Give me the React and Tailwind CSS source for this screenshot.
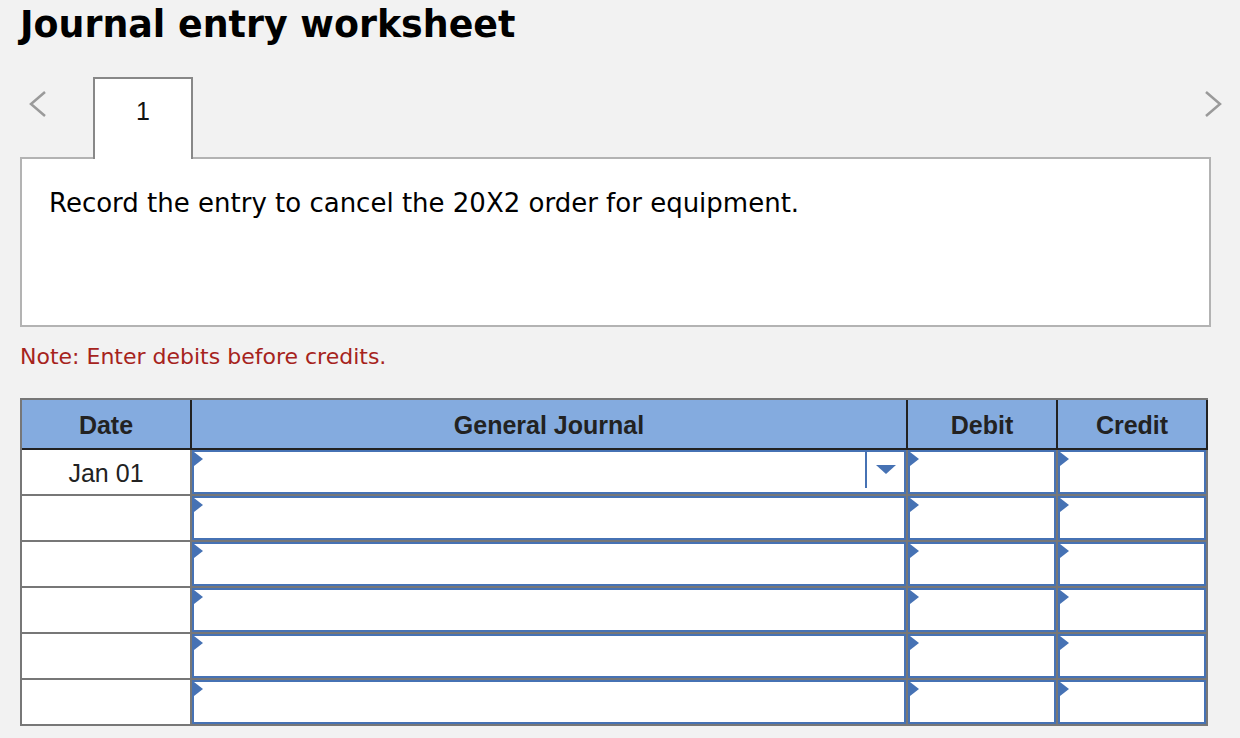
import React from "react";

const Flag = () => (
  <svg className="absolute left-0 top-0" width="10" height="14" viewBox="0 0 10 14">
    <polygon points="0,0 9,7 0,14" fill="#4672b4" />
  </svg>
);

const InputBox = ({ w, dropdown }) => (
  <div className={`relative h-[44px] bg-white border-2 border-[#4672b4] ${w}`}>
    <Flag />
    {dropdown && (
      <>
        <div className="absolute right-[37px] top-[-1px] w-[2px] h-[37px] bg-[#4672b4]" />
        <svg className="absolute right-[8px] top-[13px]" width="20" height="10" viewBox="0 0 20 10">
          <polygon points="0,0 20,0 10,9" fill="#4672b4" />
        </svg>
      </>
    )}
  </div>
);

export default function App() {
  const rows = [0, 1, 2, 3, 4, 5];
  return (
    <div className="min-h-[738px] w-[1240px] bg-[#f2f2f2] pl-[20px]">
      <h1
        className="pt-[3px] h-[77px] text-[36.4px] font-bold text-black leading-[44px]"
        style={{ fontFamily: '"DejaVu Sans", Verdana, sans-serif' }}
      >
        Journal entry worksheet
      </h1>
      <div className="flex items-end w-[1191px]">
        <div className="w-[73px] h-[80px] flex items-center pl-[8px] pb-[26px]">
          <svg width="20" height="28" viewBox="0 0 20 28">
            <polyline points="17,2 3,14 17,26" fill="none" stroke="#9a9a9a" strokeWidth="2.5" />
          </svg>
        </div>
        <div
          className="relative z-10 -mb-[2px] w-[100px] h-[82px] bg-white border-2 border-b-0 border-[#888] flex justify-center pt-[14px] text-[25px] text-[#111]"
          style={{ fontFamily: '"Liberation Sans", Arial, sans-serif' }}
        >
          1
        </div>
        <div className="flex-1 h-[80px] flex items-center justify-end pr-[0px] pb-[26px]">
          <svg width="20" height="28" viewBox="0 0 20 28" className="-mr-[12px]">
            <polyline points="3,2 17,14 3,26" fill="none" stroke="#9a9a9a" strokeWidth="2.5" />
          </svg>
        </div>
      </div>
      <div
        className="w-[1191px] h-[170px] bg-white border-2 border-[#b3b3b3] pl-[27px] pt-[25px] text-[26px] text-black"
        style={{ fontFamily: '"DejaVu Sans", Verdana, sans-serif' }}
      >
        Record the entry to cancel the 20X2 order for equipment.
      </div>
      <div
        className="h-[71px] pt-[13px] text-[22px] text-[#a6231c]"
        style={{ fontFamily: '"DejaVu Sans", Verdana, sans-serif' }}
      >
        Note: Enter debits before credits.
      </div>
      <div
        className="w-[1188px] border-l-2 border-t-2 border-[#777]"
        style={{ fontFamily: '"Liberation Sans", Arial, sans-serif' }}
      >
        <div className="flex h-[50px] pt-[3px] bg-[#84abdf] border-b-2 border-r-2 border-[#222] text-[25px] font-bold text-[#222]">
          <div className="w-[168px] flex items-center justify-center">Date</div>
          <div className="w-[716px] -mt-[3px] border-l-2 border-[#222] flex items-center justify-center pt-[3px]">General Journal</div>
          <div className="w-[150px] -mt-[3px] border-l-2 border-[#222] flex items-center justify-center pt-[3px]">Debit</div>
          <div className="w-[150px] -mt-[3px] border-l-2 border-[#222] flex items-center justify-center pt-[3px]">Credit</div>
        </div>
        <div className="bg-[#777] pr-[2px] pb-[2px] flex flex-col gap-[2px]">
          {rows.map((i) => (
            <div key={i} className="flex gap-[2px]">
              <div className="w-[168px] h-[44px] pt-[3px] bg-white flex items-center justify-center text-[25px] text-[#222]">
                {i === 0 ? "Jan 01" : ""}
              </div>
              <InputBox w="w-[714px]" dropdown={i === 0} />
              <InputBox w="w-[148px]" />
              <InputBox w="w-[148px]" />
            </div>
          ))}
        </div>
      </div>
    </div>
  );
}
